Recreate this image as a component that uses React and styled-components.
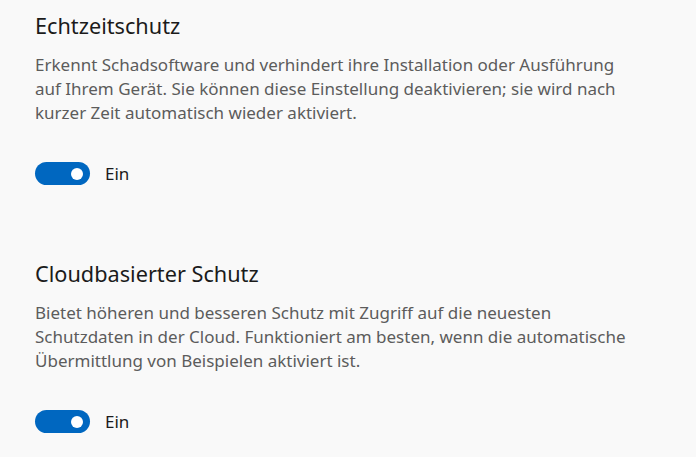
import React from "react";
import styled, { createGlobalStyle } from "styled-components";

const Global = createGlobalStyle`
  html, body { margin: 0; padding: 0; background: #f9f9f9; }
  body { font-family: "Noto Sans", "Open Sans", sans-serif; }
`;

const Page = styled.div`
  padding: 10px 0 0 35px;
  display: flex;
  flex-direction: column;
  gap: 73px;
`;

const Section = styled.section`
  display: flex;
  flex-direction: column;
`;

const Title = styled.h2`
  margin: 0;
  font-size: 21.7px;
  font-weight: 400;
  line-height: 32px;
  color: #1b1b1b;
`;

const Desc = styled.p`
  margin: 11px 0 0;
  font-size: 17px;
  line-height: 24px;
  color: #5c5c5c;
  max-width: 640px;
  white-space: nowrap;
`;

const ToggleRow = styled.div`
  display: flex;
  align-items: center;
  gap: 15px;
  margin-top: 37px;
`;

const Track = styled.div`
  width: 55px;
  height: 23px;
  border-radius: 12px;
  background: #0067c0;
  display: flex;
  align-items: center;
  justify-content: flex-end;
  padding: 0 7px;
  box-sizing: border-box;
`;

const Thumb = styled.div`
  width: 12px;
  height: 12px;
  border-radius: 50%;
  background: #fff;
`;

const Label = styled.span`
  font-size: 17px;
  color: #1b1b1b;
`;

const data = [
  {
    title: "Echtzeitschutz",
    lines: [
      "Erkennt Schadsoftware und verhindert ihre Installation oder Ausführung",
      "auf Ihrem Gerät. Sie können diese Einstellung deaktivieren; sie wird nach",
      "kurzer Zeit automatisch wieder aktiviert.",
    ],
  },
  {
    title: "Cloudbasierter Schutz",
    lines: [
      "Bietet höheren und besseren Schutz mit Zugriff auf die neuesten",
      "Schutzdaten in der Cloud. Funktioniert am besten, wenn die automatische",
      "Übermittlung von Beispielen aktiviert ist.",
    ],
  },
];

export default function App() {
  return (
    <>
      <Global />
      <Page>
        {data.map((s) => (
          <Section key={s.title}>
            <Title>{s.title}</Title>
            <Desc>
              {s.lines.map((l, i) => (
                <React.Fragment key={i}>
                  {l}
                  {i < s.lines.length - 1 && <br />}
                </React.Fragment>
              ))}
            </Desc>
            <ToggleRow>
              <Track>
                <Thumb />
              </Track>
              <Label>Ein</Label>
            </ToggleRow>
          </Section>
        ))}
      </Page>
    </>
  );
}
